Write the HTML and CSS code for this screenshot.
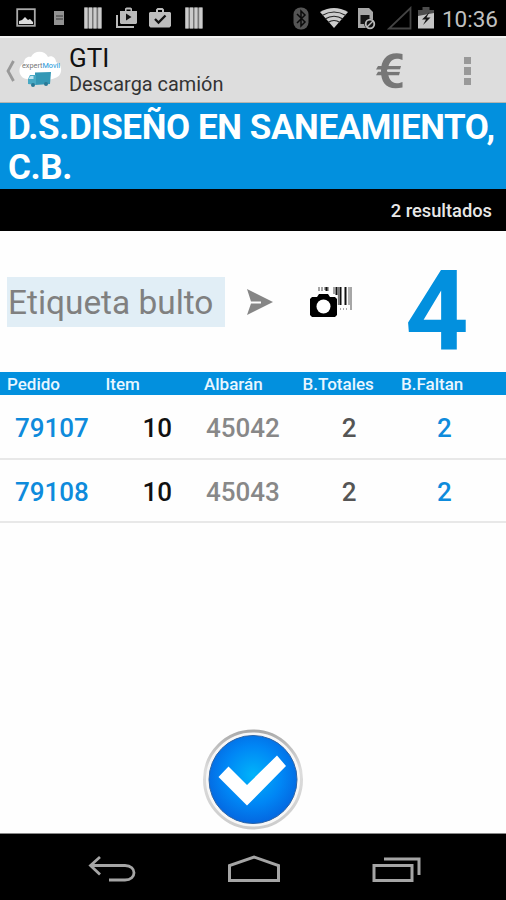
FILE: index.html
```html
<!DOCTYPE html>
<html lang="es">

<head>
  <meta charset="UTF-8">
  <meta name="viewport" content="width=device-width, initial-scale=1.0">
  <title>GTI - Descarga camión</title>
  <link rel="stylesheet" href="styles.css">
</head>

<body>
  <div class="status-bar">
    <div class="notifications">
      <svg width="20" height="20" viewBox="0 0 20 20"><rect x="1.2" y="1.2" width="17.6" height="16.6" fill="none" stroke="#aaa" stroke-width="1.8"/><path d="M3 16v-3l3-1 3-3 3 3 2-1 3 3v2z" fill="#ddd"/></svg>
      <svg width="12" height="16" viewBox="0 0 12 16"><path d="M1 1h10v14H1z" fill="#929292"/><path d="M3 6h7M3 9h7" stroke="#555" stroke-width="1.5"/></svg>
      <svg width="18" height="22" viewBox="0 0 18 22"><path d="M0 .5h18v21H0z" fill="#777"/><path d="M2 .5v21M6.5 .5v21M11 .5v21M15.7 .5v21" stroke="#ccc" stroke-width="3"/></svg>
      <svg width="22" height="22" viewBox="0 0 22 22"><path d="M5 4h4V1.5L10.5 .5h4L16 1.5V4h5v12l-1 1H5l-1-1V4z" fill="#bbb"/><path d="M10.5 2.5h4V4h-4z" fill="#000"/><path d="M10 6.5v7l5.5-3.5z" fill="#111"/><path d="M1 8v12h17" fill="none" stroke="#bbb" stroke-width="2"/></svg>
      <svg width="22" height="22" viewBox="0 0 22 22"><path d="M1 5h6V2.5L8.5 1h5L15 2.5V5h6l1 1v13l-1.5 1.5h-19L0 19V6z" fill="#bdbdbd"/><path d="M9 3h4v2H9z" fill="#000"/><path d="M6 12l3.5 3.5 7-7" fill="none" stroke="#111" stroke-width="2.3"/></svg>
      <svg width="18" height="22" viewBox="0 0 18 22"><path d="M0 .5h18v21H0z" fill="#777"/><path d="M2 .5v21M6.5 .5v21M11 .5v21M15.7 .5v21" stroke="#ccc" stroke-width="3"/></svg>
    </div>
    <div class="indicators">
      <svg width="16" height="23" viewBox="0 0 16 23"><rect x=".5" y=".5" width="15" height="22" rx="7" fill="#555"/><path d="M4 7l8 8-4 4V4l4 4-8 8" fill="none" stroke="#0a0a0a" stroke-width="1.5"/></svg>
      <svg width="28" height="20" viewBox="0 0 28 20"><path d="M0 4Q14-4 28 4L14 20z" fill="#ccc"/><path d="M2 7.5q12-7 24 0M5 11q9-5.5 18 0M8 14.5q6-4 12 0" fill="none" stroke="#222" stroke-width="1.2"/></svg>
      <svg width="19" height="23" viewBox="0 0 19 23"><path d="M1 1h11l4 4v8a5 5 0 0 0-7 8H1z" fill="#a8a8a8"/><path d="M3.5 8h9v5l-4 4h-5z" fill="#151515"/><circle cx="13" cy="17" r="4.3" fill="#111" stroke="#bbb" stroke-width="1.8"/><path d="M10 20l6-6" stroke="#bbb" stroke-width="1.5"/></svg>
      <svg width="25" height="24" viewBox="0 0 25 24"><path d="M23.5 2v20.5H2z" fill="none" stroke="#444" stroke-width="1.8"/></svg>
      <svg width="16" height="22" viewBox="0 0 16 22"><path d="M0 3h4.5V0h7v3H16v9H0z" fill="#4d4d4d"/><path d="M0 9l16-3v15.5H0z" fill="#c5c5c5"/><path d="M11.5 5L4 12.5h4L5 18l7.5-7.5h-4z" fill="#151515"/></svg>
      <span class="clock">10:36</span>
    </div>
  </div>

  <div class="action-bar">
    <svg class="back" width="10" height="22" viewBox="0 0 10 22"><path d="M8.5 1L3 11l5.5 10" fill="none" stroke="#999" stroke-width="2.8"/></svg>
    <svg class="logo" width="43" height="37" viewBox="0 0 43 37">
      <path d="M8 28C-1 27-2 15 5 12c0-5 4-7 7-6 3-7 14-7 17 0 4-2 8 1 8 5 7 2 7 14-1 16-5 3-22 3-28 1z" fill="#fff"/>
      <text class="logo-text" x="3" y="17">expert<tspan class="logo-accent">Movil</tspan></text>
      <path d="M16 21.500l16-.5-1 12-15 1z" fill="#3498b6"/>
      <path d="M11 24h6v10l-8-1v-5z" fill="#48a9c4"/>
      <path d="M11.500 25h3v3h-5z" fill="#c0e4ef"/>
      <circle cx="14" cy="34" r="2" fill="#2a7894"/><circle cx="27" cy="33" r="2" fill="#2a7894"/>
    </svg>
    <div class="heading">
      <div class="app-name">GTI</div>
      <div class="subtitle">Descarga camión</div>
    </div>
    <svg class="euro" width="28" height="36" viewBox="0 0 28 36"><path d="M26.5 1v6C17 3 12 9 12 18s5 15 14.500 11v5.500C11 38 5 30 5 18S12-2 26.500 1z" fill="#777"/><path d="M2 13h23l-1 3.500H0zM2 18.700h22l-1 3.500H0z" fill="#777"/><path d="M11 17.600h13" stroke="#ddd" stroke-width="2"/></svg>
    <div class="overflow"><i></i><i></i><i></i></div>
  </div>

  <h1 class="customer">D.S.DISEÑO EN SANEAMIENTO, C.B.</h1>
  <div class="results">2 resultados</div>

  <div class="scan">
    <input class="label-input" type="text" placeholder="Etiqueta bulto">
    <svg class="send" width="28" height="26" viewBox="0 0 28 26"><path d="M1 0l26 13L1 26l4-11.500h10v-2H5z" fill="#868686"/></svg>
    <svg class="camera" width="44" height="32" viewBox="0 0 44 32">
      <path d="M10 1v4M13 1v4M16 1v3M19 1v4M25 1v7M29.500 1v18M42 1v23" stroke="#777" stroke-width="1.3"/>
      <path d="M17.500 1v4M27.500 1v8M31.500 1v18M36.500 1v18" stroke="#111" stroke-width="2"/>
      <path d="M40 1v18" stroke="#999" stroke-width="1.5"/>
      <path d="M31 23h9" stroke="#aaa" stroke-width="2" stroke-dasharray="1 2"/>
      <path d="M3 11h5l2-3h9l2 3h5l2 2v16l-2 2H3l-2-2V13z" fill="#000"/>
      <circle cx="14.500" cy="20.500" r="7" fill="#fff"/>
    </svg>
    <div class="pending">4</div>
  </div>

  <table class="orders">
    <thead>
      <tr>
        <th>Pedido</th>
        <th>Item</th>
        <th>Albarán</th>
        <th>B.Totales</th>
        <th>B.Faltan</th>
      </tr>
    </thead>
    <tbody>
      <tr>
        <td class="order">79107</td>
        <td class="item">10</td>
        <td class="note">45042</td>
        <td class="total">2</td>
        <td class="missing">2</td>
      </tr>
      <tr>
        <td class="order">79108</td>
        <td class="item">10</td>
        <td class="note">45043</td>
        <td class="total">2</td>
        <td class="missing">2</td>
      </tr>
    </tbody>
  </table>

  <div class="confirm">
    <svg width="102" height="102" viewBox="0 0 102 102">
      <defs>
        <radialGradient id="blue" cx=".5" cy=".45" r=".55">
          <stop offset="0" stop-color="#00b4fa"/>
          <stop offset=".6" stop-color="#0086f5"/>
          <stop offset="1" stop-color="#0467e0"/>
        </radialGradient>
        <linearGradient id="ring" x2="0" y2="1">
          <stop offset="0" stop-color="#aaa"/>
          <stop offset=".4" stop-color="#ddd"/>
          <stop offset="1" stop-color="#ccc"/>
        </linearGradient>
      </defs>
      <circle cx="51" cy="50.500" r="48.500" fill="#f7f7f7" stroke="url(#ring)" stroke-width="3"/>
      <circle cx="51" cy="50.500" r="44" fill="url(#blue)" stroke="#2d64a5" stroke-width="1"/>
      <path d="M16.500 48l10-10.500L45 56l30-29.500L84 37 45 76.500z" fill="#fff"/>
    </svg>
  </div>

  <div class="nav-bar">
    <svg width="48" height="28" viewBox="0 0 48 28"><path d="M12 2L2.500 10.500l9.500 9M3 10.500h34c12 0 12 14.500 0 14.500H21" fill="none" stroke="#a5a5a5" stroke-width="2.8"/></svg>
    <svg width="54" height="28" viewBox="0 0 54 28"><path d="M2.500 25.500V10.500L27 2l24.500 8.500v15z" fill="none" stroke="#a5a5a5" stroke-width="3"/></svg>
    <svg width="50" height="28" viewBox="0 0 50 28"><path d="M2 10.500h38v15H2zM12 4h35v16" fill="none" stroke="#a5a5a5" stroke-width="3"/></svg>
  </div>
</body>

</html>
```
FILE: styles.css
```css
* {
  box-sizing: border-box;
}

body {
  margin: 0;
  height: 900px;
  display: flex;
  flex-direction: column;
  font-family: Roboto, "Liberation Sans", sans-serif;
  background-color: #fefefe;
  overflow: hidden;
}

svg {
  display: block;
  flex: none;
}

/* Android status bar */
.status-bar {
  height: 36px;
  flex: none;
  display: flex;
  justify-content: space-between;
  background-color: #000;
  padding: 0 8px 0 9px;
}

.notifications {
  display: grid;
  grid-template-columns: repeat(6, 33.6px);
  align-items: center;
  justify-items: center;
}

.indicators {
  display: grid;
  grid-template-columns: 33px 33px 33px 33px 20px 62px;
  align-items: center;
  justify-items: center;
}

.clock {
  justify-self: end;
  padding-top: 1px;
  font-size: 22.5px;
  color: #c0c0c0;
}

/* Title bar */
.action-bar {
  height: 67px;
  flex: none;
  display: flex;
  align-items: center;
  padding: 2px 35px 0 5px;
  background-color: #ddd;
  border-top: 2px solid #f2f2f2;
  border-bottom: 1px solid #b5b5b0;
}

.logo {
  margin-left: 4px;
  margin-bottom: 4px;
}

.logo-text {
  font-size: 7.3px;
  fill: #777;
}

.logo-accent {
  fill: #2196d8;
}

.heading {
  flex: 1;
  margin-left: 7px;
  color: #111;
}

.app-name {
  font-size: 26px;
  line-height: 28px;
}

.subtitle {
  font-size: 19.9px;
  line-height: 26px;
  color: #333;
}

.euro {
  margin-right: 60px;
}

.overflow {
  display: grid;
  gap: 3px;
}

.overflow i {
  width: 7px;
  height: 7.5px;
  background-color: #999;
}

.customer {
  margin: 0;
  height: 86px;
  flex: none;
  padding: 5px 0 0 8px;
  font-size: 35px;
  line-height: 40px;
  letter-spacing: -0.4px;
  color: #fff;
  background-color: #0290de;
}

.results {
  height: 42px;
  flex: none;
  padding-right: 14px;
  font-size: 18.3px;
  font-weight: 500;
  line-height: 43px;
  text-align: right;
  color: #e8e8e8;
  background-color: #000;
}

.scan {
  height: 141px;
  flex: none;
  display: flex;
  align-items: center;
  padding-left: 7px;
}

.label-input {
  width: 218px;
  height: 50px;
  padding: 2px 1px 0;
  border: 0;
  border-radius: 0;
  outline: none;
  font-family: inherit;
  font-size: 33.4px;
  background-color: #e1eef6;
}

.label-input::placeholder {
  color: #808080;
}

.send {
  margin-left: 21px;
}

.camera {
  margin-left: 35px;
}

.pending {
  margin-left: 52px;
  padding-top: 18px;
  font-size: 111px;
  font-weight: bold;
  line-height: 100px;
  color: #0290de;
}

/* Order lines */
.orders {
  width: 100%;
  flex: none;
  table-layout: fixed;
  border-collapse: collapse;
}

.orders th {
  width: 98.5px;
  height: 23px;
  padding: 1px 0 0 7px;
  font-size: 17px;
  font-weight: 500;
  line-height: 22px;
  text-align: left;
  color: #e9f6ff;
  background-color: #0290de;
}

.orders th:last-child {
  width: auto;
}

.orders td {
  height: 63.5px;
  padding: 3px 0 0;
  font-size: 26px;
  font-weight: 500;
  border-bottom: 2px solid #e8e8e8;
}

.orders .order {
  padding-left: 15px;
  color: #0e8bdc;
}

.orders .item {
  padding-right: 25px;
  text-align: right;
  color: #111;
}

.orders .note {
  padding-left: 9px;
  color: #888;
}

.orders .total {
  padding-left: 9px;
  text-align: center;
  color: #555;
}

.orders .missing {
  padding-left: 43px;
  color: #0e8bdc;
}

.confirm {
  margin-top: auto;
  display: flex;
  justify-content: center;
  padding-bottom: 2px;
}

.nav-bar {
  height: 67px;
  flex: none;
  display: flex;
  justify-content: center;
  align-items: center;
  gap: 91px;
  padding-top: 3px;
  padding-left: 3px;
  background-color: #000;
  border-top: 1px solid #888;
}
```
